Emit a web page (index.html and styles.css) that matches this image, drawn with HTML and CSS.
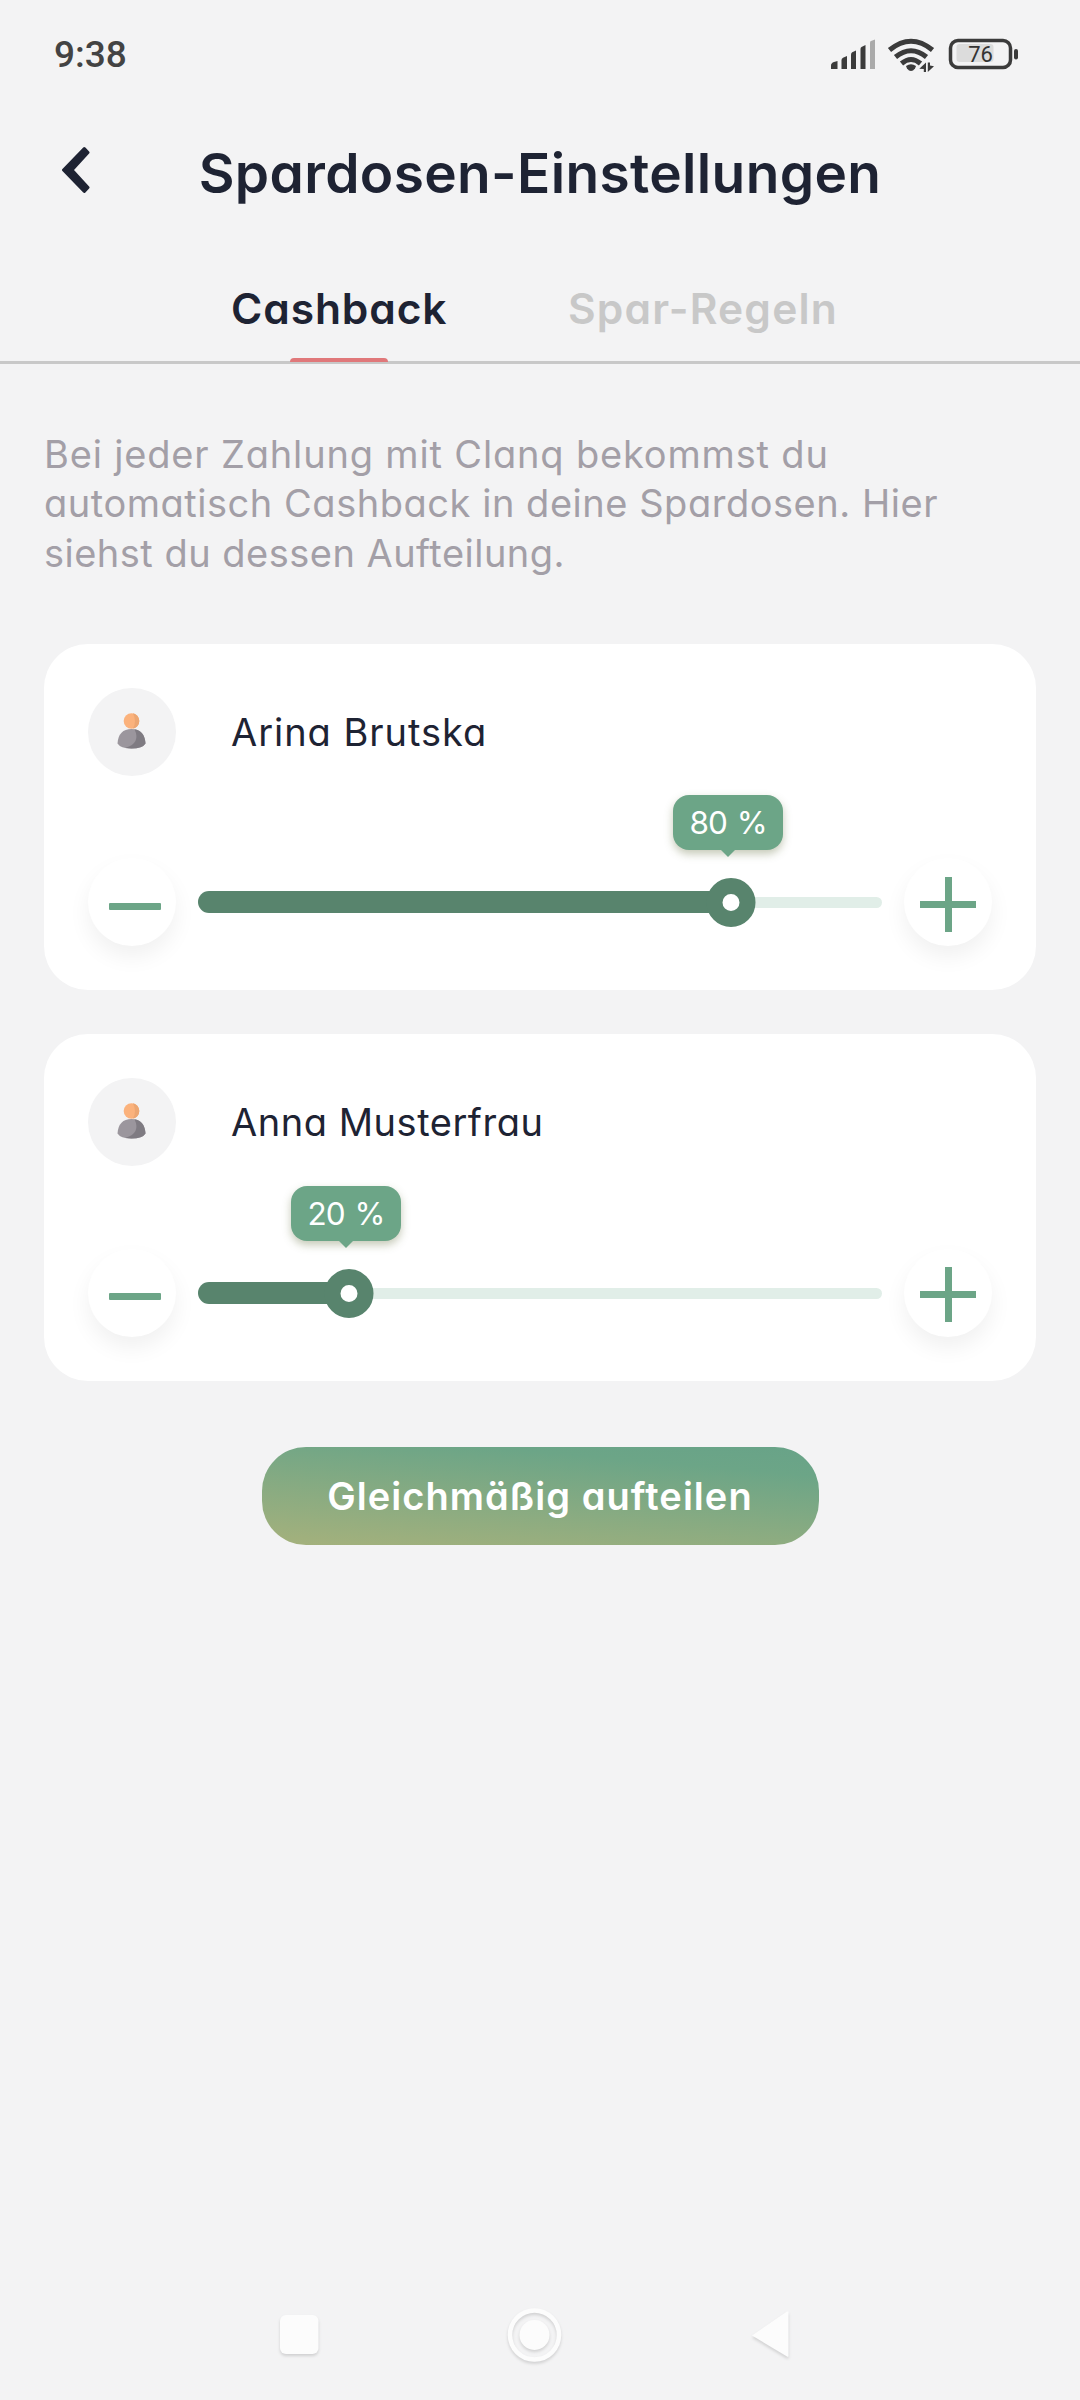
FILE: index.html
```html
<!DOCTYPE html>
<html lang="de">
<head>
<meta charset="utf-8">
<title>Spardosen-Einstellungen</title>
<link rel="stylesheet" href="styles.css">
</head>
<body>
<div class="screen">
  <div class="status">
    <span class="time">9:38</span>
    <svg class="status-icons" width="190" height="36" viewBox="829 36 190 36" aria-hidden="true">
      <g fill="#3b3b3b">
        <path d="M831 69v-3.500q0-2.500 3-3.500l3.500-1v8z"/>
        <path d="M841.500 69v-9q0-1.500 1.500-2.300l4-1.700v13z"/>
        <path d="M851 69V54.500q0-1.500 1.200-2.200L856 50.500V69z"/>
        <path d="M860.500 69V49q0-1.500 1-2l4-2v24z"/>
      </g>
      <path d="M870 69V42.500q0-1.200 1-1.600l4-1.400V69z" fill="#aaa"/>
      <g fill="none" stroke="#3b3b3b" stroke-width="5">
        <path d="M889.500 50q21.500-17.500 43 0"/>
        <path d="M895.500 57q15.500-12.500 31 0"/>
        <path d="M901.500 63.500q9.500-8 19 0"/>
      </g>
      <path d="M906 66q5-3.500 10 0l-1 2.500q-4 5-8 0z" fill="#3b3b3b"/>
      <path d="M926 62.500V72h-2.200v-3l-4.500-.2z M927.800 72v-9.500h2.200v3l4 .7z" fill="#3b3b3b"/>
      <rect x="956.500" y="44" width="37" height="18" rx="3" fill="#dcdcdc"/>
      <rect x="950.500" y="40.500" width="60" height="27" rx="7.500" fill="none" stroke="#3b3b3b" stroke-width="3.500"/>
      <rect x="1014" y="49" width="4" height="10.500" rx="2" fill="#3b3b3b"/>
      <text x="980.500" y="62.300" text-anchor="middle" class="battery-level">76</text>
    </svg>
  </div>

  <header class="header">
    <svg class="back" width="30" height="48" viewBox="0 0 30 48" aria-hidden="true">
      <path d="M3.500 24 24.300 2.500 28 6.500 12 24 28 41.500 24.300 45.500z" fill="#1e2333" stroke="#1e2333" stroke-width="3" stroke-linejoin="round"/>
    </svg>
    <h1 class="title">Spardosen-Einstellungen</h1>
  </header>

  <nav class="tabs">
    <div class="tab tab-active">Cashback</div>
    <div class="tab tab-rules">Spar-Regeln</div>
  </nav>

  <main class="content">
    <p class="intro"><span class="line line-1">Bei jeder Zahlung mit Clanq bekommst du</span> <span class="line line-2">automatisch Cashback in deine Spardosen. Hier</span> <span class="line line-3">siehst du dessen Aufteilung.</span></p>

    <section class="card">
      <div class="person">
        <div class="avatar">
          <svg width="30" height="40" viewBox="0 0 30 40" aria-hidden="true">
            <circle cx="14.500" cy="9" r="7.800" fill="#fbb27c"/>
            <path d="M16 1.300a7.800 7.800 0 0 1 0 15.300q4-7 0-15.300z" fill="#eca672"/>
            <path d="M.5 31.500q1-14.500 14-14.500t14 14.500q-3 5-14 5t-14-5z" fill="#9b969d"/>
            <path d="M17.500 17.200q10 1.500 11 14.300-3 5-14 5-3 0-6-.7Q24 31 17.500 17.200z" fill="#7f7b82"/>
          </svg>
        </div>
        <span class="name">Arina Brutska</span>
      </div>
      <div class="control">
        <div class="round"><span class="bar"></span></div>
        <div class="slider">
          <div class="rail"></div>
          <div class="fill" style="width:533px"></div>
          <div class="thumb" style="left:533px"></div>
          <div class="bubble" style="left:530px">80 %</div>
        </div>
        <div class="round"><span class="bar plus"></span></div>
      </div>
    </section>

    <section class="card">
      <div class="person">
        <div class="avatar">
          <svg width="30" height="40" viewBox="0 0 30 40" aria-hidden="true">
            <circle cx="14.500" cy="9" r="7.800" fill="#fbb27c"/>
            <path d="M16 1.300a7.800 7.800 0 0 1 0 15.300q4-7 0-15.300z" fill="#eca672"/>
            <path d="M.5 31.500q1-14.500 14-14.500t14 14.500q-3 5-14 5t-14-5z" fill="#9b969d"/>
            <path d="M17.500 17.200q10 1.500 11 14.300-3 5-14 5-3 0-6-.7Q24 31 17.500 17.200z" fill="#7f7b82"/>
          </svg>
        </div>
        <span class="name name-long">Anna Musterfrau</span>
      </div>
      <div class="control">
        <div class="round"><span class="bar"></span></div>
        <div class="slider">
          <div class="rail"></div>
          <div class="fill" style="width:151px"></div>
          <div class="thumb" style="left:151px"></div>
          <div class="bubble" style="left:148px">20 %</div>
        </div>
        <div class="round"><span class="bar plus"></span></div>
      </div>
    </section>

    <button class="split">Gleichmäßig aufteilen</button>
  </main>

  <footer class="system-nav">
    <svg width="540" height="80" viewBox="265 2295 540 80" aria-hidden="true">
      <g class="nav-shapes" fill="#fcfcfc">
        <rect x="280" y="2315" width="38.500" height="39" rx="6"/>
        <circle cx="534.500" cy="2335" r="24.500" fill="none" stroke="#fcfcfc" stroke-width="4.500"/>
        <circle cx="534.500" cy="2335" r="15"/>
        <path d="M752 2335.500 787 2311.500q1.500-.5 1.500 1v43q0 2-1.500 1z"/>
      </g>
    </svg>
  </footer>
</div>
</body>
</html>
```
FILE: styles.css
```css
* {
  box-sizing: border-box;
}

body {
  margin: 0;
  background: #f3f3f4;
  color: #1e2333;
  font-family: Inter, "Liberation Sans", sans-serif;
  font-feature-settings: "cv11";
}

.screen {
  display: flex;
  flex-direction: column;
  width: 1080px;
  height: 2400px;
}

.status {
  display: flex;
  justify-content: space-between;
  align-items: center;
  height: 108px;
  padding: 0 61px 0 54px;
}

.time {
  padding-top: 2px;
  font: 500 37px/44px Roboto, sans-serif;
  color: #434343;
}

.battery-level {
  font: 400 22px Roboto, sans-serif;
  fill: #333;
}

.header {
  display: grid;
  grid-template-columns: 100px 1fr 100px;
  align-items: center;
  height: 126px;
}

.back {
  margin: 0 0 2px 60px;
}

.title {
  margin: 3px 0 0;
  text-align: center;
  font-size: 55px;
  font-weight: 600;
  line-height: 66px;
  letter-spacing: 0.35px;
}

.tabs {
  display: flex;
  height: 130px;
  padding: 50px 0 0 231px;
  gap: 120.500px;
  border-bottom: 3px solid #c8c8c8;
}

.tab {
  position: relative;
  height: 79px;
  font-size: 42.500px;
  font-weight: 600;
  line-height: 50px;
  letter-spacing: 0.9px;
}

.tab-active::after {
  content: "";
  position: absolute;
  left: 59px;
  bottom: 1px;
  width: 98px;
  height: 4px;
  border-radius: 4px 4px 0 0;
  background: #e0787a;
}

.tab-rules {
  color: #c8c8c8;
  letter-spacing: 1.2px;
}

.content {
  display: flex;
  flex-direction: column;
  flex: 1;
  padding: 66px 44px 0;
}

.intro {
  margin: 0 0 66.100px;
  color: #a39fa7;
  font-size: 38px;
  line-height: 49.300px;
}

.line {
  display: block;
  white-space: nowrap;
}

.line-1 {
  letter-spacing: 0.83px;
}

.line-2 {
  letter-spacing: 0.53px;
}

.line-3 {
  letter-spacing: 0.48px;
}

.card {
  height: 346.500px;
  margin-bottom: 44px;
  padding: 44px;
  border-radius: 44px;
  background: #fff;
}

.person {
  display: flex;
  align-items: center;
  gap: 55px;
}

.avatar {
  display: flex;
  justify-content: center;
  align-items: center;
  width: 88px;
  height: 88px;
  border-radius: 50%;
  background: #f3f3f4;
}

.name {
  font-size: 38px;
  line-height: 46px;
  letter-spacing: 0.95px;
}

.name-long {
  letter-spacing: 0.53px;
}

.control {
  display: flex;
  align-items: center;
  gap: 22px;
  margin-top: 82.500px;
}

.round {
  display: flex;
  justify-content: center;
  align-items: center;
  width: 88px;
  height: 88px;
  border-radius: 50%;
  background: #fff;
  box-shadow: 0 11px 22px rgba(0, 0, 0, 0.06);
}

.bar {
  width: 52px;
  height: 7px;
  margin: 8px 0 0 5px;
  border-radius: 1px;
  background: #6ca587;
}

.plus {
  display: flex;
  justify-content: center;
  align-items: center;
  width: 56px;
  margin: 4px 0 0;
  border-radius: 0;
}

.plus::before {
  content: "";
  flex: none;
  width: 7px;
  height: 55px;
  background: #6ca587;
}

.slider {
  position: relative;
  width: 684px;
  height: 88px;
}

.rail,
.fill,
.thumb,
.bubble {
  position: absolute;
}

.rail {
  top: 39px;
  left: 5px;
  right: 0;
  height: 11px;
  border-radius: 6px;
  background: #e1eee8;
}

.fill {
  top: 33px;
  left: 0;
  height: 22px;
  border-radius: 11px;
  background: #58846d;
}

.thumb {
  top: 20px;
  width: 49px;
  height: 49px;
  border: 16px solid #58846d;
  border-radius: 50%;
  background: #fff;
  transform: translateX(-50%);
}

.bubble {
  top: -63px;
  width: 110px;
  height: 55px;
  border-radius: 16px;
  background: #6ca587;
  box-shadow: 0 4px 8px rgba(90, 100, 50, 0.35);
  color: #fff;
  font-size: 31.500px;
  line-height: 56px;
  letter-spacing: -1px;
  word-spacing: 2px;
  text-align: center;
  transform: translateX(-50%);
}

.bubble::after {
  content: "";
  position: absolute;
  top: 54px;
  left: 47px;
  border: 8px solid transparent;
  border-top-color: #6ca587;
  border-bottom: 0;
}

.split {
  align-self: center;
  width: 557px;
  height: 98.500px;
  margin-top: 22px;
  padding: 0;
  border: 0;
  border-radius: 44px;
  background: linear-gradient(5deg, #a5b17c 0%, #6ca587 80%, #68a388 100%);
  color: #fff;
  font: 600 38px/98px Inter, "Liberation Sans", sans-serif;
  font-feature-settings: "cv11";
  letter-spacing: 1.05px;
}

.system-nav {
  height: 105px;
  padding-left: 265px;
}

.nav-shapes {
  filter: drop-shadow(0 2px 1.500px rgba(0, 0, 0, 0.14));
}
```
